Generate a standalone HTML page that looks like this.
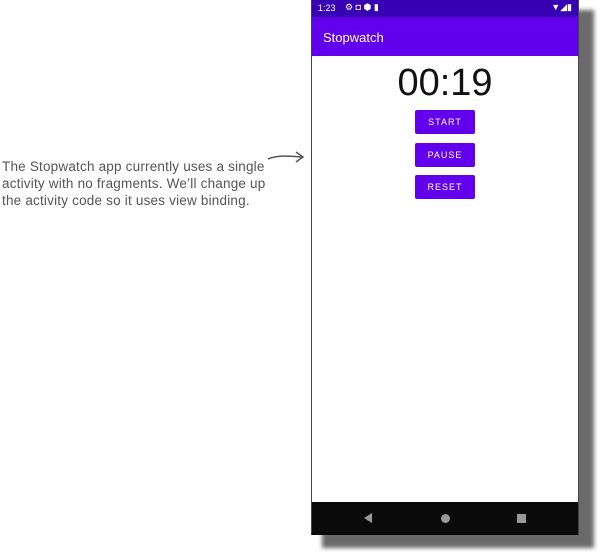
<!DOCTYPE html>
<html><head><style>
body{margin:0;width:600px;height:556px;background:#fff;position:relative;overflow:hidden;font-family:"Liberation Sans",sans-serif}
.shadow{position:absolute;left:322px;top:10px;width:272px;height:538px;background:#6a6a6a;filter:blur(2px)}
.phone{position:absolute;left:311px;top:0;width:268px;height:535px;background:#fff;border-left:1px solid #444;border-right:1px solid #444;box-sizing:border-box}
.status{position:absolute;left:0;top:0;width:100%;height:17px;background:#3700B3;color:#fff;font-size:9px}
.app{position:absolute;left:0;top:17px;width:100%;height:39px;background:#6200EE;color:#fff;font-size:13px}
.btn{position:absolute;left:103px;width:60px;height:24px;background:#6200EE;color:#fff;font-size:9px;letter-spacing:1px;text-align:center;line-height:24px;border-radius:2px}
.nav{position:absolute;left:0;top:502px;width:100%;height:33px;background:#0a0a0a}
.note{position:absolute;left:2px;top:158px;font-family:"Liberation Sans Narrow","Liberation Sans",sans-serif;font-size:13.5px;letter-spacing:0.2px;line-height:17px;color:#555;white-space:nowrap}
</style></head><body>
<div class="note">The Stopwatch app currently uses a single<br>activity with no fragments. We’ll change up<br>the activity code so it uses view binding.</div>
<svg style="position:absolute;left:266px;top:150px" width="40" height="16"><path d="M2 9 C12 5,22 6,36 7 M30 2 L37 7 L30 12" stroke="#555" stroke-width="1.5" fill="none"/></svg>
<div class="shadow"></div>
<div class="phone">
 <div class="status"><span style="position:absolute;left:6px;top:3px">1:23</span>
  <span style="position:absolute;left:33px;top:2px;font-size:9px">⚙ ◘ ⬢ ▮</span>
  <span style="position:absolute;right:6px;top:2px;font-size:9px">▼◢▮</span></div>
 <div class="app"><span style="position:absolute;left:11px;top:13px">Stopwatch</span></div>
 <div style="position:absolute;left:0;width:100%;top:62px;text-align:center;font-size:38px;color:#111">00:19</div>
 <div class="btn" style="top:110px">START</div>
 <div class="btn" style="top:143px">PAUSE</div>
 <div class="btn" style="top:175px">RESET</div>
 <div class="nav">
  <svg style="position:absolute;left:50px;top:10px" width="12" height="12"><path d="M10 1 L2 6 L10 11Z" fill="#999"/></svg>
  <div style="position:absolute;left:129px;top:12px;width:9px;height:9px;border-radius:50%;background:#999"></div>
  <div style="position:absolute;left:205px;top:12px;width:9px;height:9px;background:#999"></div>
 </div>
</div>
</body></html>
